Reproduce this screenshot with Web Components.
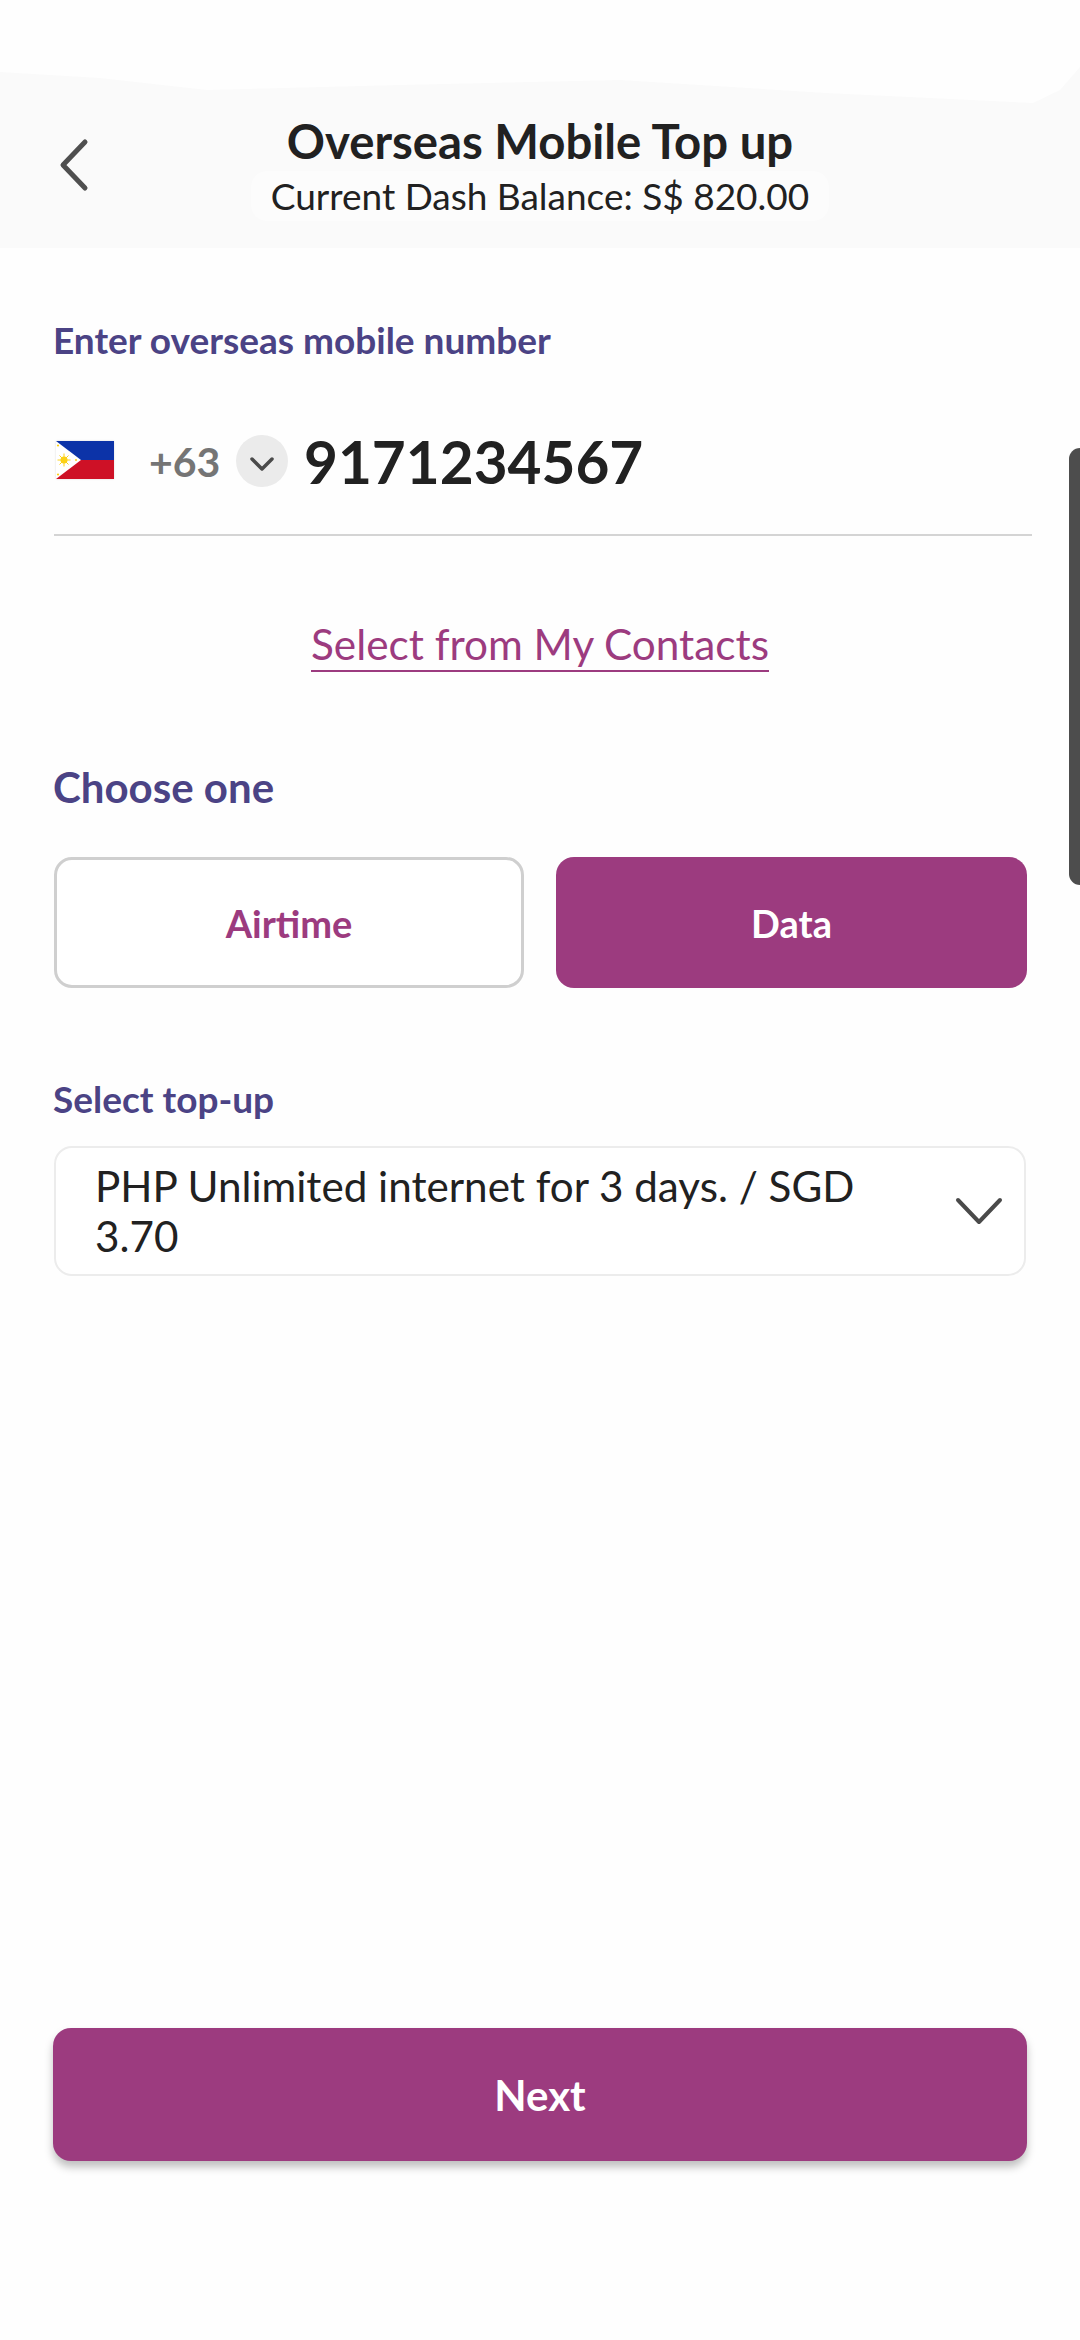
<!DOCTYPE html>
<html>
<head>
<meta charset="utf-8">
<title>Overseas Mobile Top up</title>
<style>
  html, body { margin: 0; padding: 0; background: #fefefe; }
  body { font-family: Lato, "Open Sans", sans-serif; color: #212121; }
</style>
</head>
<body>

<topup-screen>
  <top-bar title="Overseas Mobile Top up" balance="Current Dash Balance: S$ 820.00"></top-bar>
  <phone-field label="Enter overseas mobile number" code="+63" number="9171234567"></phone-field>
  <contact-link>Select from My Contacts</contact-link>
  <choice-toggle heading="Choose one" first="Airtime" second="Data"></choice-toggle>
  <topup-select label="Select top-up">PHP Unlimited internet for 3 days. / SGD 3.70</topup-select>
  <next-button slot="footer">Next</next-button>
</topup-screen>
<scroll-handle></scroll-handle>

<script>
class TopupScreen extends HTMLElement {
  constructor() {
    super();
    let shadow = this.attachShadow({ mode: "open" });
    shadow.innerHTML = `
    <style>
      :host { display: flex; flex-direction: column; height: 2340px; overflow: hidden; }
      .footer { margin-top: auto; padding: 0 53px 179px; }
    </style>
    <slot></slot>
    <div class="footer"><slot name="footer"></slot></div>
    `;
  }
}
customElements.define("topup-screen", TopupScreen);

class TopBar extends HTMLElement {
  constructor() {
    super();
    let shadow = this.attachShadow({ mode: "open" });
    shadow.innerHTML = `
    <style>
      :host { display: block; height: 248px; position: relative; }
      .band {
        position: absolute; inset: 0;
        background: #fafafa;
        clip-path: polygon(0 72px, 100px 78px, 207px 90px, 400px 85px, 620px 80px, 826px 93px, 1033px 103px, 1060px 90px, 1080px 67px, 1080px 248px, 0 248px);
      }
      .text { position: relative; padding-top: 113px; text-align: center; }
      h1 { margin: 0; font-size: 47.3px; line-height: 56px; font-weight: 700; color: #212121; }
      p {
        display: table; margin: 2px auto 0; padding: 0 20px;
        font-size: 37px; line-height: 50px; color: #212121;
        background: #fcfcfc; border-radius: 16px;
      }
      svg { position: absolute; left: 56px; top: 138px; }
    </style>
    <div class="band"></div>
    <div class="text">
      <h1></h1>
      <p></p>
    </div>
    <svg width="34" height="54" viewBox="0 0 34 54">
      <path d="M29 4 L7 27 L29 50" fill="none" stroke="#4f4f4f" stroke-width="5" stroke-linecap="round" stroke-linejoin="round"/>
    </svg>
    `;
    shadow.querySelector("h1").textContent = this.getAttribute("title");
    shadow.querySelector("p").textContent = this.getAttribute("balance");
  }
}
customElements.define("top-bar", TopBar);

class PhoneField extends HTMLElement {
  constructor() {
    super();
    let shadow = this.attachShadow({ mode: "open" });
    shadow.innerHTML = `
    <style>
      :host { display: block; margin: 0 48px 0 54px; padding-top: 70px; }
      label { display: block; margin-left: -1px; font-size: 37px; line-height: 44px; font-weight: 700; color: #4b4385; }
      .row {
        display: flex; align-items: center; height: 62px; margin-top: 68px;
        border-bottom: 2px solid #d4d4d4;
        padding-bottom: 42px;
      }
      .flag { width: 58px; height: 38px; margin: -3px 0 0 2px; flex: none; box-shadow: 0 0 2px #ddd; }
      .code { margin-left: 35px; font-size: 41px; font-weight: 700; color: #757575; width: 71px; }
      .more {
        width: 52px; height: 52px; margin-left: 16px; border-radius: 50%; background: #ebebeb;
        display: flex; align-items: center; justify-content: center; flex: none;
      }
      .more svg { margin-top: 5px; }
      .number { margin-left: 16px; font-size: 58.5px; font-weight: 700; color: #212121; }
    </style>
    <label></label>
    <div class="row">
      <svg class="flag" viewBox="0 0 58 38">
        <rect width="58" height="19" fill="#0c33a8"/>
        <rect y="19" width="58" height="19" fill="#ce1126"/>
        <path d="M0 0 L25 19 L0 38 Z" fill="#fff"/>
        <circle cx="8" cy="19" r="3.5" fill="#fcd116"/>
        <path d="M8 12.5 V25.5 M1.5 19 H14.5 M3.5 14.5 L12.5 23.5 M12.5 14.5 L3.5 23.5" stroke="#fcd116" stroke-width="1"/>
        <circle cx="2" cy="4.5" r="1.1" fill="#fcd116"/>
        <circle cx="2" cy="33.5" r="1.1" fill="#fcd116"/>
        <circle cx="20" cy="19" r="1" fill="#fcd116"/>
      </svg>
      <span class="code"></span>
      <span class="more">
        <svg width="26" height="16" viewBox="0 0 26 16">
          <path d="M3 3 L13 13 L23 3" fill="none" stroke="#4a4a4a" stroke-width="3.5" stroke-linecap="round" stroke-linejoin="round"/>
        </svg>
      </span>
      <span class="number"></span>
    </div>
    `;
    shadow.querySelector("label").textContent = this.getAttribute("label");
    shadow.querySelector(".code").textContent = this.getAttribute("code");
    shadow.querySelector(".number").textContent = this.getAttribute("number");
  }
}
customElements.define("phone-field", PhoneField);

class ContactLink extends HTMLElement {
  constructor() {
    super();
    let shadow = this.attachShadow({ mode: "open" });
    shadow.innerHTML = `
    <style>
      :host { display: block; text-align: center; padding-top: 82px; }
      a {
        display: inline-block; font-size: 42.3px; line-height: 52px; color: #9c3b7f;
        border-bottom: 2px solid #9c3b7f;
      }
    </style>
    <a><slot></slot></a>
    `;
  }
}
customElements.define("contact-link", ContactLink);

class ChoiceToggle extends HTMLElement {
  constructor() {
    super();
    let shadow = this.attachShadow({ mode: "open" });
    shadow.innerHTML = `
    <style>
      :host { display: block; margin: 0 53px 0 54px; padding-top: 91px; }
      h2 { margin: 0 0 0 -1px; font-size: 42px; line-height: 48px; font-weight: 700; color: #4b4385; }
      .options { display: grid; grid-template-columns: 470px 471px; column-gap: 32px; margin-top: 46px; }
      .option {
        box-sizing: border-box; height: 131px; border-radius: 18px;
        display: flex; align-items: center; justify-content: center;
        font-size: 38px; font-weight: 700;
      }
      .off { border: 3px solid #cfcfcf; background: #fff; color: #9c3b7f; }
      .on { background: #9c3b7f; color: #fff; }
    </style>
    <h2></h2>
    <div class="options">
      <div class="option off"></div>
      <div class="option on"></div>
    </div>
    `;
    shadow.querySelector("h2").textContent = this.getAttribute("heading");
    shadow.querySelector(".off").textContent = this.getAttribute("first");
    shadow.querySelector(".on").textContent = this.getAttribute("second");
  }
}
customElements.define("choice-toggle", ChoiceToggle);

class TopupSelect extends HTMLElement {
  constructor() {
    super();
    let shadow = this.attachShadow({ mode: "open" });
    shadow.innerHTML = `
    <style>
      :host { display: block; margin: 0 54px; padding-top: 89px; }
      label { display: block; margin-left: -1px; font-size: 37px; line-height: 44px; font-weight: 700; color: #4b4385; }
      .box {
        box-sizing: border-box; height: 130px; margin-top: 25px;
        border: 2px solid #ececec; border-radius: 18px; background: #fff;
        display: flex; align-items: center; padding: 0 21px 0 39px;
        font-size: 42.2px; line-height: 50px; color: #212121;
      }
      .value { flex: 1; padding-right: 50px; }
      svg { flex: none; }
    </style>
    <label></label>
    <div class="box">
      <div class="value"><slot></slot></div>
      <svg width="48" height="30" viewBox="0 0 48 30">
        <path d="M3 4 L24 26 L45 4" fill="none" stroke="#4a4a4a" stroke-width="4" stroke-linecap="round" stroke-linejoin="round"/>
      </svg>
    </div>
    `;
    shadow.querySelector("label").textContent = this.getAttribute("label");
  }
}
customElements.define("topup-select", TopupSelect);

class NextButton extends HTMLElement {
  constructor() {
    super();
    let shadow = this.attachShadow({ mode: "open" });
    shadow.innerHTML = `
    <style>
      :host {
        display: flex; align-items: center; justify-content: center;
        height: 133px; border-radius: 18px; background: #9c3b7f; color: #fff;
        font-size: 42px; font-weight: 700;
        box-shadow: 0 6px 8px rgba(0,0,0,0.25);
      }
    </style>
    <slot></slot>
    `;
  }
}
customElements.define("next-button", NextButton);

// side handle, lies over the page edge
class ScrollHandle extends HTMLElement {
  constructor() {
    super();
    let shadow = this.attachShadow({ mode: "open" });
    shadow.innerHTML = `
    <style>
      :host {
        position: absolute; top: 448px; right: 0; width: 11px; height: 437px;
        background: #4d4d4d; border-radius: 12px 0 0 12px;
      }
    </style>
    `;
  }
}
customElements.define("scroll-handle", ScrollHandle);
</script>
</body>
</html>
